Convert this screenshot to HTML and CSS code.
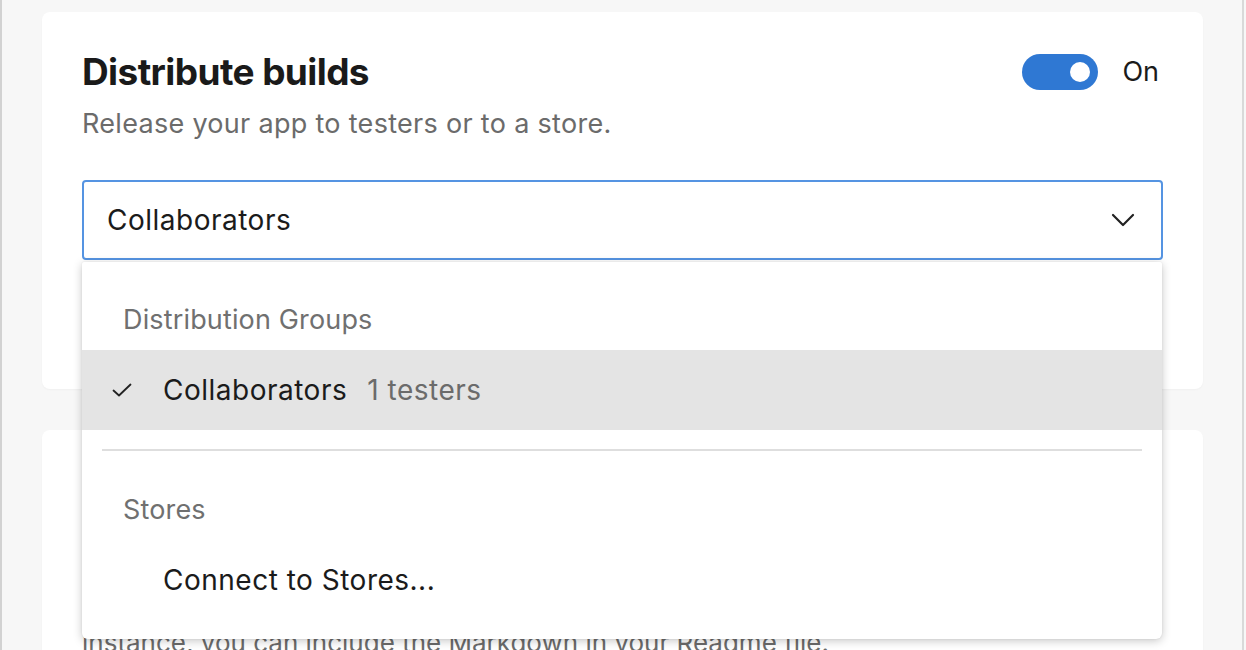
FILE: index.html
```html
<!DOCTYPE html>
<html>
<head>
<meta charset="utf-8">
<link rel="stylesheet" href="styles.css">
</head>
<body>
<div class="frame">
  <div class="content">
    <section class="card card-distribute">
      <div class="card-head">
        <div class="head-text">
          <h2 class="title">Distribute builds</h2>
          <p class="subtitle">Release your app to testers or to a store.</p>
        </div>
        <div class="toggle-wrap">
          <span class="toggle"><span class="knob"></span></span>
          <span class="toggle-label">On</span>
        </div>
      </div>
      <div class="select-wrap">
        <div class="select">
          <span class="select-value">Collaborators</span>
          <svg class="chevron" width="24" height="14" viewBox="0 0 24 14"><path d="M2 2 L12 12 L22 2" fill="none" stroke="#222" stroke-width="2.2" stroke-linecap="round" stroke-linejoin="round"/></svg>
        </div>
        <div class="dropdown">
          <div class="group-header">Distribution Groups</div>
          <div class="option selected">
            <svg class="check" width="20" height="14" viewBox="0 0 20 14"><path d="M1.5 7.5 L7 12.5 L18.5 1.5" fill="none" stroke="#222" stroke-width="1.8" stroke-linecap="round" stroke-linejoin="round"/></svg>
            <span class="option-name">Collaborators</span>
            <span class="option-meta">1 testers</span>
          </div>
          <div class="divider"></div>
          <div class="group-header">Stores</div>
          <div class="option">
            <span class="option-name">Connect to Stores...</span>
          </div>
        </div>
      </div>
    </section>
    <section class="card card-badge">
      <p class="badge-text">instance, you can include the Markdown in your Readme file.</p>
    </section>
  </div>
</div>
</body>
</html>
```

FILE: styles.css
```css
html, body {
  margin: 0;
  padding: 0;
}
body {
  background: #f7f7f7;
  width: 1246px;
  height: 650px;
  overflow: hidden;
  font-family: Inter, "Noto Sans", "Liberation Sans", sans-serif;
  color: #1b1b1b;
}
.frame {
  width: 1240px;
  height: 650px;
  overflow: hidden;
  border-left: 2px solid #d2d2d2;
  border-right: 2px solid #d9d9d9;
  background: #f7f7f7;
}
.content {
  padding: 12px 39px 0 40px;
  display: flex;
  flex-direction: column;
  gap: 41px;
}
.card {
  background: #ffffff;
  border-radius: 8px;
  padding: 0 40px;
  box-shadow: 0 1px 2px rgba(0,0,0,0.03);
}
.card-distribute {
  height: 377px;
  box-sizing: border-box;
  padding-top: 36px;
}
.card-head {
  display: flex;
  justify-content: space-between;
  align-items: flex-start;
}
.title {
  margin: 0;
  font-size: 37px;
  line-height: 48px;
  font-weight: 700;
  letter-spacing: -0.6px;
  color: #1a1a1a;
}
.subtitle {
  margin: 10px 0 0;
  font-size: 27px;
  line-height: 36px;
  color: #6b6b6b;
  letter-spacing: 0.3px;
}
.toggle-wrap {
  display: flex;
  align-items: center;
  gap: 24px;
  margin-top: 6px;
}
.toggle {
  width: 76px;
  height: 36px;
  border-radius: 18px;
  background: #2f78d3;
  display: flex;
  align-items: center;
  justify-content: flex-end;
  padding-right: 8px;
  box-sizing: border-box;
  margin-left: -1px;
}
.knob {
  width: 20px;
  height: 20px;
  border-radius: 50%;
  background: #ffffff;
}
.toggle-label {
  font-size: 27px;
  color: #1b1b1b;
  margin-right: 4px;
  margin-top: -2px;
}
.select-wrap {
  position: relative;
  margin-top: 38px;
}
.select {
  height: 80px;
  box-sizing: border-box;
  border: 2px solid #5594e2;
  border-radius: 4px;
  display: flex;
  align-items: center;
  justify-content: space-between;
  padding: 0 26px 0 23px;
}
.select-value {
  font-size: 28px;
  letter-spacing: 0.5px;
  color: #1b1b1b;
}
.chevron {
  display: block;
}
.dropdown {
  position: absolute;
  top: 82px;
  left: 0;
  width: 1080px;
  box-sizing: border-box;
  background: #ffffff;
  border-radius: 2px 2px 6px 6px;
  box-shadow: 0 2px 10px rgba(0,0,0,0.22), 0 0 2px rgba(0,0,0,0.08);
  padding: 28px 0 19px;
  z-index: 2;
}
.group-header {
  height: 60px;
  line-height: 60px;
  padding-left: 41px;
  font-size: 27px;
  letter-spacing: 0.15px;
  color: #707070;
}
.option {
  height: 80px;
  display: flex;
  align-items: center;
  padding-left: 81px;
  position: relative;
  font-size: 28px;
  letter-spacing: 0.5px;
}
.option.selected {
  background: #e4e4e4;
}
.check {
  position: absolute;
  left: 30px;
  top: 33px;
}
.option-name {
  color: #1b1b1b;
}
.option-meta {
  color: #6b6b6b;
  margin-left: 20px;
}
.divider {
  height: 2px;
  background: #dedede;
  margin: 19px 20px 29px;
}
.card-badge {
  height: 260px;
  padding-top: 195px;
  box-sizing: border-box;
}
.badge-text {
  margin: 0;
  font-size: 26px;
  line-height: 36px;
  color: #6b6b6b;
  white-space: nowrap;
}
```
